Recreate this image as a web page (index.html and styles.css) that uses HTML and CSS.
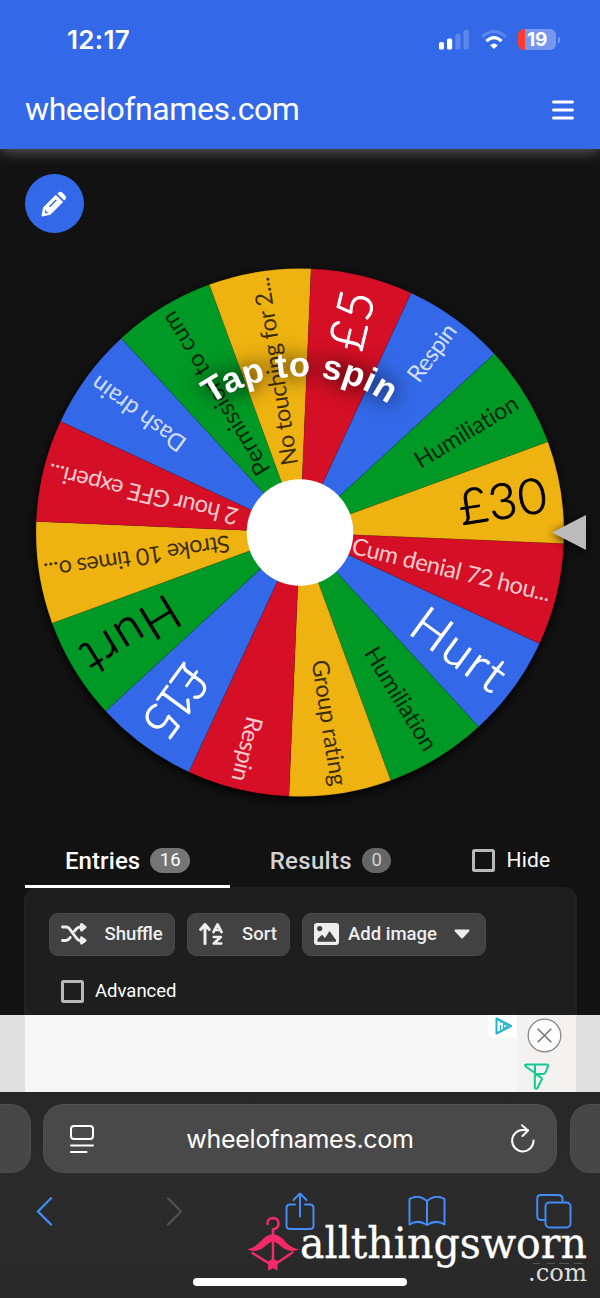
FILE: index.html
```html
<!DOCTYPE html>
<html lang="en">
<head>
<meta charset="utf-8">
<title>wheelofnames.com</title>
<link rel="stylesheet" href="styles.css">
</head>
<body>
<div class="phone">
  <header class="header">
    <div class="status">
      <span class="time">12:17</span>
      <div class="status-icons">
        <svg width="31" height="20" viewBox="0 0 31 20" fill="#fff"><rect x="0" y="12" width="5" height="7.500" rx="1.600"/><rect x="8" y="8.500" width="5.200" height="11" rx="1.600"/><g opacity=".2"><rect x="16.300" y="4" width="5.200" height="15.500" rx="1.600"/><rect x="24.600" y="0" width="5.200" height="19.500" rx="1.600"/></g></svg>
        <svg width="26" height="20" viewBox="0 0 26 20" fill="none" stroke="#fff" stroke-width="3.200"><path d="M1.300 6.800Q13-4 24.700 6.800" opacity=".2"/><path d="M5.400 11.200Q13 4 20.600 11.200"/><path d="M13 19 9.200 15.200Q13 12 16.800 15.200Z" fill="#fff" stroke="none"/></svg>
        <div class="battery"><span>19</span></div>
      </div>
    </div>
    <div class="brand">
      <span class="site">wheelofnames.com</span>
      <svg width="22" height="20" viewBox="0 0 22 20" stroke="#fff" stroke-width="3" stroke-linecap="round"><path d="M1.500 2h19M1.500 10h19M1.500 18h19"/></svg>
    </div>
  </header>

  <main class="main">
    <button class="edit" aria-label="Edit">
      <svg width="26" height="26" viewBox="0 0 26 26"><path d="M1 25 2.600 16.500 14.800 4.300 21.500 11 9.300 23.300Z" fill="#fff" stroke="#fff" stroke-linejoin="round"/><path d="m16.400 2.800 1.300-1.300q1.600-1.300 3.400 0l3.300 3.300q1.400 1.700 0 3.400l-1.300 1.300Z" fill="#fff"/><path d="M8.500 15.800 15.300 9" stroke="#3369e8" stroke-width="1.500"/><path d="m4.500 18.500.7 2.200 2.500.7-2.700 1.200-1.500-1.600Z" fill="#3369e8"/></svg>
    </button>

    <svg class="wheel" width="600" height="560" viewBox="-300 -280.500 600 560">
      <defs>
        <path id="s" d="M0 0 264 0A264 264 0 0 1 243.900 101.030Z"/>
        <path id="arc" d="M-156 0A156 156 0 0 1 156 0"/>
      </defs>
      <circle class="rim" r="264"/>
      <g class="slices" transform="rotate(2.400)">
        <use href="#s" class="red"/>
        <use href="#s" class="blue" transform="rotate(22.500)"/>
        <use href="#s" class="green" transform="rotate(45)"/>
        <use href="#s" class="yellow" transform="rotate(67.500)"/>
        <use href="#s" class="red" transform="rotate(90)"/>
        <use href="#s" class="blue" transform="rotate(112.500)"/>
        <use href="#s" class="green" transform="rotate(135)"/>
        <use href="#s" class="yellow" transform="rotate(157.500)"/>
        <use href="#s" class="red" transform="rotate(180)"/>
        <use href="#s" class="blue" transform="rotate(202.500)"/>
        <use href="#s" class="green" transform="rotate(225)"/>
        <use href="#s" class="yellow" transform="rotate(247.500)"/>
        <use href="#s" class="red" transform="rotate(270)"/>
        <use href="#s" class="blue" transform="rotate(292.500)"/>
        <use href="#s" class="green" transform="rotate(315)"/>
        <use href="#s" class="yellow" transform="rotate(337.500)"/>
      </g>
      <g class="labels">
        <text class="light" transform="rotate(13.650)" x="54" y="8.500" textLength="204">Cum denial 72 hou...</text>
        <text class="light big" transform="rotate(36.150)" x="145" y="17.500" textLength="105">Hurt</text>
        <text transform="rotate(58.650)" x="136" y="8.500" textLength="117">Humiliation</text>
        <text transform="rotate(81.150)" x="129" y="8.500" textLength="127">Group rating</text>
        <text class="light" transform="rotate(103.650)" x="190" y="8.500" textLength="66">Respin</text>
        <text class="light big" transform="rotate(126.150)" x="171" y="17.500" textLength="77">£15</text>
        <text class="big" transform="rotate(148.650)" x="145" y="17.500" textLength="105">Hurt</text>
        <text transform="rotate(171.150)" x="71" y="8.500" textLength="188">Stroke 10 times o...</text>
        <text class="light" transform="rotate(193.650)" x="64" y="8.500" textLength="195">2 hour GFE experi...</text>
        <text class="light" transform="rotate(216.150)" x="145" y="8.500" textLength="111">Dash drain</text>
        <text transform="rotate(238.650)" x="69" y="8.500" textLength="187">Permission to cum</text>
        <text transform="rotate(261.150)" x="68" y="8.500" textLength="190">No touching for 2...</text>
        <text class="light big" transform="rotate(283.650)" x="189" y="17.500" textLength="59">£5</text>
        <text class="light" transform="rotate(306.150)" x="190" y="8.500" textLength="66">Respin</text>
        <text transform="rotate(328.650)" x="136" y="8.500" textLength="117">Humiliation</text>
        <text class="big" transform="rotate(351.150)" x="161" y="17.500" textLength="88">£30</text>
      </g>
      <circle r="53.300" fill="#fff"/>
      <text class="spin"><textPath href="#arc" startOffset="50%" text-anchor="middle">Tap to spin</textPath></text>
      <path class="pointer" d="M252 0 286-17.500V17.500Z"/>
    </svg>

    <nav class="tabs">
      <div class="tab active">Entries <span class="count">16</span></div>
      <div class="tab results">Results <span class="count">0</span></div>
      <label class="check hide"><i class="box"></i>Hide</label>
    </nav>

    <section class="card">
      <div class="actions">
        <button class="btn shuffle"><svg width="26" height="22" viewBox="0 0 26 22" fill="none" stroke="#eee" stroke-width="2.900" stroke-linecap="round" stroke-linejoin="round"><path d="M1.500 4H5Q7 4 8.400 5.700L15 14.500Q17 17.500 19 17.500H21M1.500 17.500H5Q7 17.500 8.700 15.200L9.200 14.500M13.500 8 15 6.200Q17 4 19 4H21"/><path d="M20.500 1.500 24 4.200 20.500 7ZM20.500 14.800 24 17.500 20.500 20.200Z" fill="#eee"/></svg>Shuffle</button>
        <button class="btn sort"><svg width="25" height="22" viewBox="0 0 25 22" fill="none" stroke="#eee" stroke-width="3" stroke-linecap="round" stroke-linejoin="round"><path d="M6 20.500V2M1.700 6.500 6 1.500 10.300 6.500"/><path d="m14.500 9 4-7.500 4 7.500M16 7h5M14.800 14h7l-7 6.500h7.500" stroke-width="2.700"/></svg>Sort</button>
        <button class="btn image"><svg width="25" height="22" viewBox="0 0 25 22"><rect width="25" height="22" rx="3" fill="#eee"/><circle cx="5.700" cy="5.600" r="2.600" fill="#424242"/><path d="M3.500 18.700V16L8 11.700 11 15 15.500 8 22 17V18.700Z" fill="#424242"/></svg>Add image<svg class="caret" width="16" height="10" viewBox="0 0 16 10"><path d="M1.500 1.500h13L8 8.500Z" fill="#eee" stroke="#eee" stroke-width="2" stroke-linejoin="round"/></svg></button>
      </div>
      <label class="check advanced"><i class="box"></i>Advanced</label>
    </section>
  </main>

  <aside class="ad">
    <div class="creative">
      <div class="ad-tag"><svg width="18" height="18" viewBox="0 0 18 18" fill="none" stroke="#20b4d2" stroke-width="2" stroke-linejoin="round"><path d="M1.500 1.500 16 9 1.500 16.500Z"/><path d="M5.500 8v5.500M5.500 4.500v1.500M8.500 12V6.500L12.500 9 8.500 11.500" stroke-width="1.200"/></svg></div>
      <div class="ad-side">
        <svg width="35" height="35" viewBox="0 0 35 35"><circle cx="17.500" cy="17.500" r="16.300" fill="#fff" stroke="#888" stroke-width="1.300"/><path d="m10.700 10.700 13.600 13.600m0-13.600L10.700 24.300" stroke="#777" stroke-width="1.600"/></svg>
        <svg class="mark" width="26" height="27" viewBox="0 0 26 27" fill="none" stroke="#10c991" stroke-width="2" stroke-linejoin="round"><path d="M2.500 1.500H22.500Q24.500 1.500 24 3.200L21.500 9.500Q21 11 19 11H12.500L1.600 3.500Q.5 1.500 2.500 1.500ZM11 1.500V11M10.500 10.500 17 14.300Q18.200 15 17.800 16.200L13.500 25Q12 26.500 10.800 25V12"/></svg>
      </div>
    </div>
  </aside>

  <footer class="browser">
    <div class="urls">
      <div class="stub left"></div>
      <div class="url">
        <svg width="24" height="28" viewBox="0 0 24 28" fill="none" stroke="#fff" stroke-width="2" stroke-linecap="round"><rect x="1" y="1" width="22" height="13" rx="3"/><path d="M1 20.500h22M1 27h15.500"/></svg>
        <span class="address">wheelofnames.com</span>
        <svg width="24" height="29" viewBox="0 0 24 29" fill="none" stroke="#fff" stroke-width="2" stroke-linecap="round" stroke-linejoin="round"><path d="M22.500 16.500A10.700 10.700 0 1 1 11.800 6H17M11 1.200 17 6.500 11.500 12"/></svg>
      </div>
      <div class="stub right"></div>
    </div>
    <div class="tools">
      <svg width="17" height="29" viewBox="0 0 17 29" fill="none" stroke="#418cf8" stroke-width="2.300" stroke-linecap="round"><path d="M15 1.300 2 14.500 15 27.500"/></svg>
      <svg width="17" height="29" viewBox="0 0 17 29" fill="none" stroke="#505050" stroke-width="2.300" stroke-linecap="round"><path d="M2 1.300 15 14.500 2 27.500"/></svg>
      <svg width="30" height="38" viewBox="0 0 30 38" fill="none" stroke="#418cf8" stroke-width="2" stroke-linecap="round" stroke-linejoin="round"><path d="M10 12.500H5Q1.500 12.500 1.500 16V33.500Q1.500 37 5 37H25Q28.500 37 28.500 33.500V16Q28.500 12.500 25 12.500H20M15 24.500V1.800M8.500 8 15 1.500 21.500 8"/></svg>
      <svg width="38" height="31" viewBox="0 0 38 31" fill="none" stroke="#418cf8" stroke-width="2" stroke-linejoin="round"><path d="M19 5Q10-2.500 1.500 3.200V28.500Q10 23 19 29 28 23 36.500 28.500V3.200Q28-2.500 19 5ZM19 5V29"/></svg>
      <svg width="36" height="35" viewBox="0 0 36 35" fill="none" stroke="#418cf8" stroke-width="2"><path d="M9 26H5Q1.200 26 1.200 22V5Q1.200 1 5 1H22Q26.500 1 26.500 5V8"/><rect x="9.500" y="8.500" width="25" height="25" rx="4"/></svg>
    </div>
    <div class="home"></div>
    <svg class="watermark" width="345" height="86" viewBox="0 0 345 86">
      <g fill="none" stroke="#f22a69" stroke-width="2.500" stroke-linecap="round"><path d="M20.500 12Q20 6.500 26 6Q31.500 6 31.500 12 31.500 16 26 17.500V23M26 30V50M5.500 41 23 52M45.500 40.500 30 51"/><path d="M0 37.500Q8 36 16 27 25.500 17.500 36 27 43 36 52 37.500 41 42 32 32.500 26 27 20 32.500 11 42 0 37.500Z" fill="#f22a69" stroke="none"/><path d="M22 49 26 47.500 30 49V58L26 55.500 22 58Z" fill="#f22a69" stroke-width="1"/></g>
      <text class="word" x="53" y="45.500" font-size="42" textLength="287" lengthAdjust="spacingAndGlyphs">allthingsworn</text>
      <text class="dotcom" x="281" y="69" font-size="25" textLength="59" lengthAdjust="spacingAndGlyphs">.com</text>
      <path d="M286 51.500h7m7 0h8m4 0h10m5 0h9" stroke="#555" stroke-width="1"/>
    </svg>
  </footer>
</div>
</body>
</html>
```
FILE: styles.css
```css
* { box-sizing: border-box; }
body { margin: 0; background: #121212; font-family: Roboto, sans-serif; color: #fff; }
svg { display: block; flex: none; }
button { border: 0; padding: 0; font: inherit; color: inherit; }

.phone { width: 600px; height: 1298px; display: flex; flex-direction: column; overflow: hidden; }

.header { position: relative; z-index: 1; height: 149px; flex: none; background: #3369e8; box-shadow: 0 2px 14px rgba(255, 255, 255, .34); }
.status { height: 79px; padding: 0 41px 0 67px; display: flex; align-items: center; justify-content: space-between; }
.time { font: 600 26px Inter, sans-serif; letter-spacing: .3px; }
.status-icons { display: flex; align-items: center; gap: 11px; }
.battery { width: 38px; height: 21px; margin-right: 3px; border-radius: 6px; background: linear-gradient(90deg, #ff3b30 7px, #7697ef 7px); display: flex; align-items: center; justify-content: center; font: 700 19px Inter, sans-serif; letter-spacing: -.2px; position: relative; }
.battery::after { content: ""; position: absolute; left: 40px; top: 7.500px; width: 2px; height: 6px; border-radius: 0 2px 2px 0; background: #7697ef; }
.brand { height: 62px; padding: 0 26px 0 25px; display: flex; align-items: center; justify-content: space-between; }
.site { font-size: 32px; letter-spacing: -.4px; padding-bottom: 2px; }

.main { height: 866px; flex: none; padding-top: 25px; overflow: hidden; }
.edit { width: 59px; height: 59px; margin-left: 24.500px; border-radius: 50%; background: #3369e8; display: grid; place-items: center; }
.wheel { margin-top: 19px; }
.rim { fill: #111; filter: drop-shadow(0 3px 4px #000); }
.slices { stroke: rgba(0, 0, 0, .12); stroke-width: .7; }
.red { fill: #d50f25; }
.blue { fill: #3369e8; }
.green { fill: #009925; }
.yellow { fill: #eeb211; }
.labels { font: 400 23.500px Lato, sans-serif; font-variant-ligatures: none; fill: rgba(0, 0, 0, .75); }
.labels .light { fill: rgba(255, 255, 255, .8); }
.labels .big { font-size: 49px; font-weight: 300; fill: #000; stroke: #000; stroke-width: 1px; stroke-linejoin: round; }
.labels .big.light { fill: #fff; stroke: #fff; }
.spin { font: 700 35px "Liberation Sans", sans-serif; letter-spacing: .5px; fill: #fff; filter: drop-shadow(0 0 10px #000); }
.pointer { fill: #bbb; filter: drop-shadow(0 2px 4px rgba(0, 0, 0, .8)); }

.tabs { height: 76px; padding-left: 25px; display: flex; font-size: 24px; font-weight: 500; }
.tab { width: 205px; padding-top: 24px; display: flex; align-items: center; justify-content: center; color: #d2d2d2; border-bottom: 3px solid transparent; letter-spacing: .1px; }
.tab.active { color: #fff; border-color: #fff; }
.results { padding-right: 4px; letter-spacing: .3px; }
.count { margin-left: 10px; height: 25px; padding: 0 9.500px; border-radius: 13px; background: #757575; font-size: 18.500px; font-weight: 400; line-height: 25px; letter-spacing: 0; }
.results .count { background: #666; }
.check { display: flex; align-items: center; font-weight: 400; }
.box { width: 23px; height: 23px; border: 3px solid #b8b8b8; border-radius: 2.500px; margin-right: 11.500px; flex: none; }
.hide { margin-left: 37px; padding-top: 20px; font-size: 21px; letter-spacing: .2px; }
.card { width: 553px; height: 140px; margin: -1.500px 0 0 24px; padding: 26px 25px; background: #1e1e1e; border: solid #222; border-width: 0 2px; border-radius: 14px 14px 0 0; }
.actions { display: flex; gap: 12px; margin-left: -2px; }
.btn { height: 43px; padding-left: 11px; border-radius: 9px; background: #424242; border: 1px solid #494949; display: flex; align-items: center; font-size: 18.500px; font-weight: 500; color: #eee; }
.shuffle { width: 126px; gap: 17.500px; }
.sort { width: 103px; gap: 18px; }
.image { width: 184px; gap: 9px; }
.caret { margin-left: 8px; }
.advanced { margin: 24px 0 0 9.500px; font-size: 18.500px; }

.ad { height: 77px; flex: none; padding: 0 24px 0 25px; background: #e0e0e0; }
.creative { height: 77px; background: #f6f6f6; display: flex; justify-content: flex-end; }
.ad-tag { width: 29px; height: 23px; padding: 2px 0 0 7px; background: #fff; border-radius: 0 0 0 5px; }
.ad-side { width: 59px; padding: 2.500px 0 0 10px; background: #f4f2f1; }
.mark { margin: 10px 0 0 -3px; }

.browser { position: relative; height: 206px; flex: none; padding-top: 12px; background: linear-gradient(#272727, #2b2b2b 45%, #292929); }
.urls { display: flex; gap: 12.500px; height: 69px; }
.stub { width: 30.500px; background: #474747; border: 1px solid #4d4d4d; }
.left { border-radius: 0 20px 20px 0; border-left: 0; }
.right { border-radius: 20px 0 0 20px; border-right: 0; }
.url { width: 514px; padding: 0 21px 0 26px; border-radius: 20px; background: #494949; border: 1px solid #505050; display: flex; align-items: center; justify-content: space-between; font: 400 25px Inter, sans-serif; letter-spacing: -.25px; }
.address { margin-right: 5px; }
.tools { display: flex; align-items: center; height: 77px; padding: 0 28px 0 36px; }
.tools svg:nth-child(2) { margin-left: 113px; }
.tools svg:nth-child(3) { margin-left: 102px; margin-top: -2px; }
.tools svg:nth-child(4) { margin-left: 93px; }
.tools svg:nth-child(5) { margin-left: 90px; }
.home { width: 214px; height: 8px; margin: 27.500px 0 0 193px; border-radius: 4px; background: #fff; }
.watermark { position: absolute; left: 247px; top: 120px; font-family: "DejaVu Serif", serif; fill: #fff; }
.word { stroke: #fff; stroke-width: .3px; }
.dotcom { fill: #ddd; }
```
